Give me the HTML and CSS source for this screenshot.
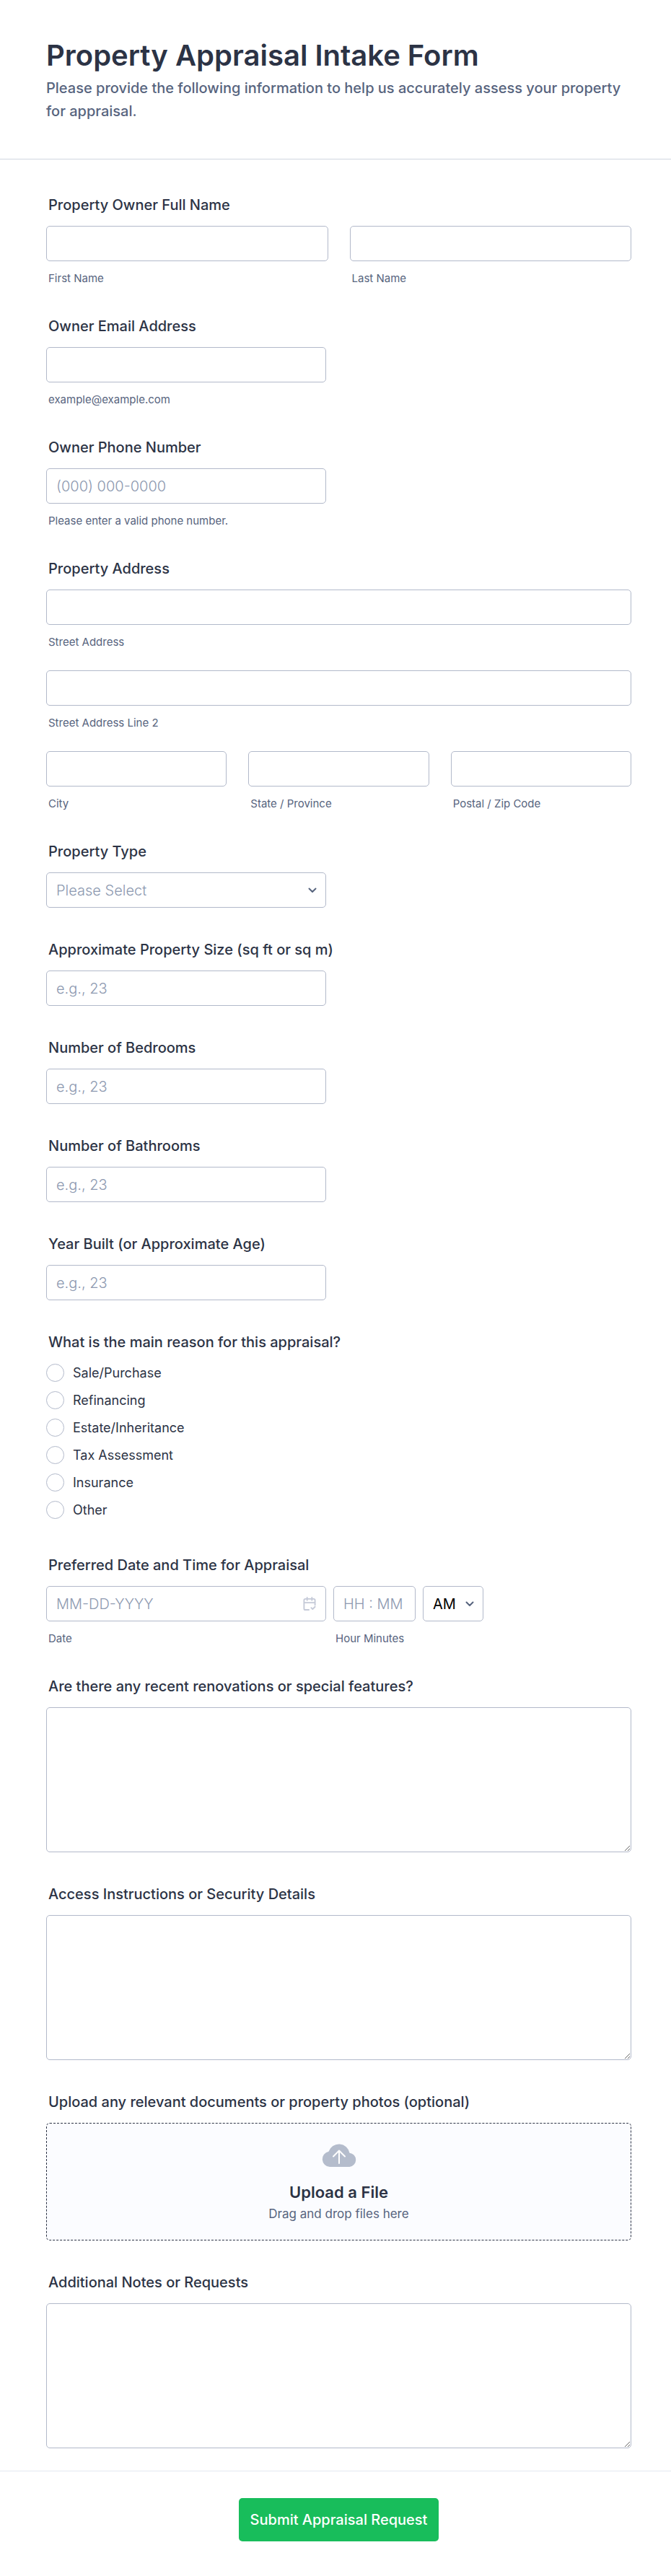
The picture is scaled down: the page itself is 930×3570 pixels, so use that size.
FILE: index.html
```html
<!DOCTYPE html>
<html lang="en">
<head>
    <meta charset="UTF-8">
    <meta name="viewport" content="width=device-width, initial-scale=1.0">
    <title>Property Appraisal Intake Form</title>
    <link rel="stylesheet" href="styles.css">
</head>
<body>

<form class="form" action="#" method="POST" enctype="multipart/form-data">
    <header class="form-header">
        <h1>Property Appraisal Intake Form</h1>
        <p>Please provide the following information to help us accurately assess your property for appraisal.</p>
    </header>

    <div class="form-body">
        <fieldset class="field">
            <legend class="title">Property Owner Full Name</legend>
            <div class="row">
                <div class="col">
                    <input type="text" id="first" name="first">
                    <label class="sub" for="first">First Name</label>
                </div>
                <div class="col">
                    <input type="text" id="last" name="last">
                    <label class="sub" for="last">Last Name</label>
                </div>
            </div>
        </fieldset>

        <div class="field">
            <label class="title" for="email">Owner Email Address</label>
            <input type="email" class="half" id="email" name="email" aria-describedby="emailHint">
            <span class="sub" id="emailHint">example@example.com</span>
        </div>

        <div class="field">
            <label class="title" for="phone">Owner Phone Number</label>
            <input type="tel" class="half" id="phone" name="phone" placeholder="(000) 000-0000" aria-describedby="phoneHint">
            <span class="sub" id="phoneHint">Please enter a valid phone number.</span>
        </div>

        <fieldset class="field">
            <legend class="title">Property Address</legend>
            <div class="address">
                <div class="col">
                    <input type="text" id="street" name="street">
                    <label class="sub" for="street">Street Address</label>
                </div>
                <div class="col">
                    <input type="text" id="street2" name="street2">
                    <label class="sub" for="street2">Street Address Line 2</label>
                </div>
                <div class="row">
                    <div class="col">
                        <input type="text" id="city" name="city">
                        <label class="sub" for="city">City</label>
                    </div>
                    <div class="col">
                        <input type="text" id="state" name="state">
                        <label class="sub" for="state">State / Province</label>
                    </div>
                    <div class="col">
                        <input type="text" id="zip" name="zip">
                        <label class="sub" for="zip">Postal / Zip Code</label>
                    </div>
                </div>
            </div>
        </fieldset>

        <div class="field">
            <label class="title" for="type">Property Type</label>
            <div class="select half">
                <select id="type" name="type" class="empty">
                    <option value="">Please Select</option>
                    <option>House</option>
                    <option>Apartment</option>
                    <option>Commercial</option>
                    <option>Land</option>
                </select>
                <svg class="arrow" viewBox="0 0 12 8" aria-hidden="true"><path d="M1.500 1.500L6 6l4.500-4.500"/></svg>
            </div>
        </div>

        <div class="field">
            <label class="title" for="size">Approximate Property Size (sq ft or sq m)</label>
            <input type="text" inputmode="numeric" class="half" id="size" name="size" placeholder="e.g., 23">
        </div>

        <div class="field">
            <label class="title" for="bedrooms">Number of Bedrooms</label>
            <input type="text" inputmode="numeric" class="half" id="bedrooms" name="bedrooms" placeholder="e.g., 23">
        </div>

        <div class="field">
            <label class="title" for="bathrooms">Number of Bathrooms</label>
            <input type="text" inputmode="numeric" class="half" id="bathrooms" name="bathrooms" placeholder="e.g., 23">
        </div>

        <div class="field">
            <label class="title" for="year">Year Built (or Approximate Age)</label>
            <input type="text" inputmode="numeric" class="half" id="year" name="year" placeholder="e.g., 23">
        </div>

        <fieldset class="field">
            <legend class="title">What is the main reason for this appraisal?</legend>
            <div class="options">
                <label><input type="radio" name="reason" value="sale">Sale/Purchase</label>
                <label><input type="radio" name="reason" value="refinancing">Refinancing</label>
                <label><input type="radio" name="reason" value="estate">Estate/Inheritance</label>
                <label><input type="radio" name="reason" value="tax">Tax Assessment</label>
                <label><input type="radio" name="reason" value="insurance">Insurance</label>
                <label><input type="radio" name="reason" value="other">Other</label>
            </div>
        </fieldset>

        <fieldset class="field">
            <legend class="title">Preferred Date and Time for Appraisal</legend>
            <div class="datetime">
                <div class="date half">
                    <input type="text" id="date" name="date" placeholder="MM-DD-YYYY">
                    <svg class="calendar" viewBox="0 0 18 20" aria-hidden="true">
                        <path d="M8 19H3a2 2 0 0 1-2-2V5a2 2 0 0 1 2-2h12a2 2 0 0 1 2 2v7M1 8.500h16M5.500 1v4M12.500 1v4M11.500 16l2 2 3.500-3.500"/>
                    </svg>
                    <label class="sub" for="date">Date</label>
                </div>
                <div class="time">
                    <input type="text" id="time" name="time" placeholder="HH : MM">
                    <label class="sub" for="time">Hour Minutes</label>
                </div>
                <div class="select ampm">
                    <select name="ampm" aria-label="AM or PM">
                        <option>AM</option>
                        <option>PM</option>
                    </select>
                    <svg class="arrow" viewBox="0 0 12 8" aria-hidden="true"><path d="M1.500 1.500L6 6l4.500-4.500"/></svg>
                </div>
            </div>
        </fieldset>

        <div class="field">
            <label class="title" for="renovations">Are there any recent renovations or special features?</label>
            <textarea id="renovations" name="renovations"></textarea>
        </div>

        <div class="field">
            <label class="title" for="access">Access Instructions or Security Details</label>
            <textarea id="access" name="access"></textarea>
        </div>

        <div class="field">
            <label class="title" for="files">Upload any relevant documents or property photos (optional)</label>
            <label class="dropzone">
                <svg class="cloud" viewBox="0 0 48 34" aria-hidden="true">
                    <path class="shape" d="M11 33A10.700 10.700 0 0 1 9.500 11.800A15 15 0 0 1 38.500 13.700A9.700 9.700 0 0 1 38.500 33Z"/>
                    <path class="up" d="M24 28V11M16 18.500l8-8 8 8"/>
                </svg>
                <strong>Upload a File</strong>
                <span>Drag and drop files here</span>
                <input type="file" id="files" name="files" multiple>
            </label>
        </div>

        <div class="field">
            <label class="title" for="notes">Additional Notes or Requests</label>
            <textarea id="notes" name="notes"></textarea>
        </div>
    </div>

    <footer class="form-footer">
        <button type="submit">Submit Appraisal Request</button>
    </footer>
</form>

</body>
</html>
```
FILE: styles.css
```css
* {
    box-sizing: border-box;
}

body {
    margin: 0;
    background-color: #fff;
    color: #2c3345;
    font-family: Inter, "Liberation Sans", sans-serif;
    font-size: 20px;
}

.form-header {
    padding: 53px 55px 50px 64px;
    border-bottom: 1px solid #d0d6e0;
}

h1 {
    margin: 0 0 5px;
    font-size: 40px;
    font-weight: 600;
    line-height: 48px;
}

.form-header p {
    margin: 0;
    color: #57647e;
    font-weight: 500;
    line-height: 32px;
}

.form-body {
    display: flex;
    flex-direction: column;
    gap: 46px;
    padding: 51px 55px 31px 64px;
}

.field {
    display: block;
    min-width: 0;
    margin: 0;
    padding: 0;
    border: none;
}

.title {
    display: block;
    margin-bottom: 17px;
    padding: 0 0 0 3px;
    font-weight: 500;
    line-height: 24px;
}

.sub {
    display: block;
    margin-top: 15px;
    padding-left: 3px;
    color: #57647e;
    font-size: 15px;
    line-height: 17px;
}

.row {
    display: flex;
    gap: 30px;
}

.col {
    flex: 1;
    min-width: 0;
}

.address {
    display: flex;
    flex-direction: column;
    gap: 31px;
}

.address > .col {
    flex: none;
}

input,
select,
textarea {
    display: block;
    width: 100%;
    height: 49px;
    margin: 0;
    padding: 0 13px;
    border: 1px solid #b2b9ca;
    border-radius: 5px;
    background-color: #fff;
    color: #000;
    font-family: inherit;
    font-size: 20px;
    font-weight: 400;
}

textarea {
    height: 201px;
    padding: 12px;
    resize: vertical;
}

input::placeholder {
    color: #8d99b0;
    font-weight: 300;
    opacity: 1;
}

.half {
    width: 388px;
    max-width: 100%;
}

/* dropdowns */
.select {
    position: relative;
}

select {
    appearance: none;
}

select.empty {
    color: #8d99b0;
    font-weight: 300;
}

.arrow {
    position: absolute;
    top: 21px;
    right: 13px;
    width: 12px;
    height: 8px;
    fill: none;
    stroke: #57647e;
    stroke-width: 2;
    stroke-linecap: round;
    stroke-linejoin: round;
    pointer-events: none;
}

/* radio list */
.options {
    display: flex;
    flex-direction: column;
    align-items: flex-start;
    gap: 13px;
    padding: 1px 0 6px;
}

.options label {
    display: flex;
    align-items: center;
    gap: 12px;
    font-size: 18px;
    line-height: 25px;
}

.options input {
    appearance: none;
    width: 25px;
    height: 25px;
    padding: 0;
    border-radius: 50%;
}

.options input:checked {
    border: 8px solid #18bd5b;
}

/* date and time */
.datetime {
    display: flex;
    flex-wrap: wrap;
    gap: 10px;
}

.date {
    position: relative;
}

.calendar {
    position: absolute;
    top: 15px;
    right: 14px;
    width: 18px;
    height: 19px;
    fill: none;
    stroke: #c5cad8;
    stroke-width: 2;
    stroke-linecap: round;
    stroke-linejoin: round;
}

.time {
    width: 114px;
}

.ampm {
    width: 84px;
}

/* file upload */
.dropzone {
    display: flex;
    flex-direction: column;
    align-items: center;
    padding: 27px 12px 24px;
    border: 1px dashed #2c3345;
    border-radius: 5px;
    background-color: #fbfcff;
    cursor: pointer;
}

.dropzone input {
    display: none;
}

.dropzone strong {
    margin-top: 20px;
    font-size: 22px;
    font-weight: 600;
    line-height: 28px;
}

.dropzone span {
    margin-top: 4px;
    color: #57647e;
    font-size: 17px;
    line-height: 24px;
}

.cloud {
    width: 48px;
    height: 34px;
}

.cloud .shape {
    fill: #b4bccc;
}

.cloud .up {
    fill: none;
    stroke: #fff;
    stroke-width: 2;
    stroke-linecap: round;
    stroke-linejoin: round;
}

.form-footer {
    display: flex;
    justify-content: center;
    padding: 37px 55px 49px 64px;
    border-top: 1px solid #e3e8f0;
}

button {
    height: 60px;
    padding: 0 16px;
    border: none;
    border-radius: 5px;
    background-color: #18bd5b;
    color: #fff;
    font-family: inherit;
    font-size: 20px;
    font-weight: 500;
    cursor: pointer;
}
```
